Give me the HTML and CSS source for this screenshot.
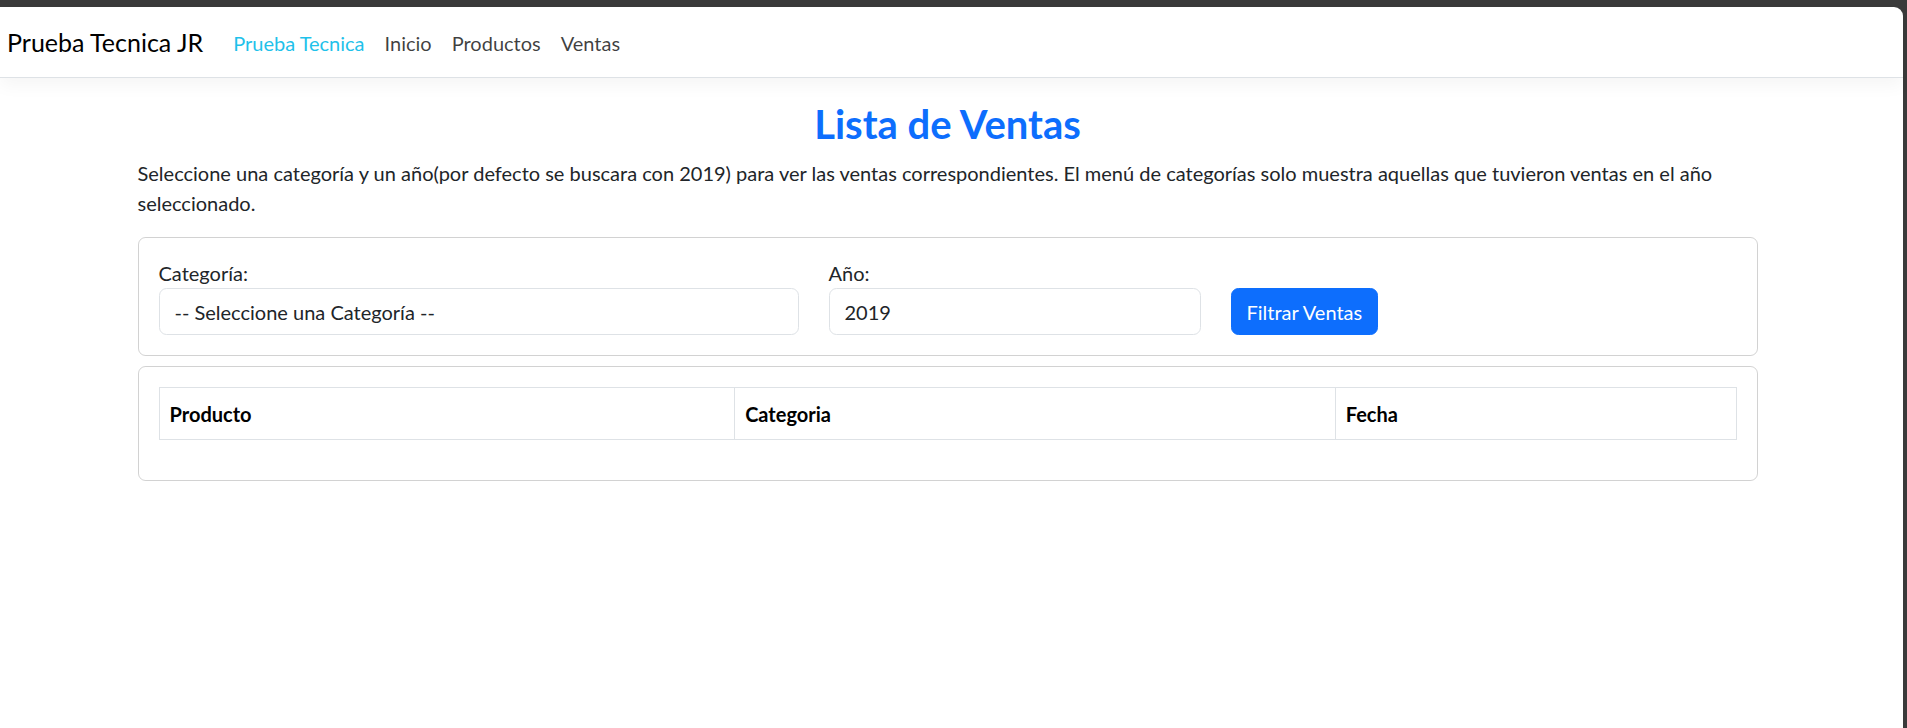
FILE: index.html
```html
<!DOCTYPE html>
<html lang="es">
<head>
<meta charset="utf-8">
<title>Prueba Tecnica JR</title>
<link rel="stylesheet" href="styles.css">
</head>
<body>
<div class="window">
  <nav class="navbar">
    <a class="brand" href="#">Prueba Tecnica JR</a>
    <ul class="nav">
      <li><a class="nav-link active" href="#">Prueba Tecnica</a></li>
      <li><a class="nav-link" href="#">Inicio</a></li>
      <li><a class="nav-link" href="#">Productos</a></li>
      <li><a class="nav-link" href="#">Ventas</a></li>
    </ul>
  </nav>
  <main class="container">
    <h2 class="title">Lista de Ventas</h2>
    <p class="intro">Seleccione una categoría y un año(por defecto se buscara con 2019) para ver las ventas correspondientes. El menú de categorías solo muestra aquellas que tuvieron ventas en el año seleccionado.</p>
    <section class="card">
      <form class="filters">
        <div class="field field-cat">
          <label class="label">Categoría:</label>
          <div class="control">-- Seleccione una Categoría --</div>
        </div>
        <div class="field field-year">
          <label class="label">Año:</label>
          <div class="control">2019</div>
        </div>
        <div class="field field-btn">
          <button type="button" class="btn">Filtrar Ventas</button>
        </div>
      </form>
    </section>
    <section class="card card-table">
      <table class="table">
        <thead>
          <tr>
            <th class="col-prod">Producto</th>
            <th class="col-cat">Categoria</th>
            <th class="col-date">Fecha</th>
          </tr>
        </thead>
        <tbody></tbody>
      </table>
    </section>
  </main>
</div>
</body>
</html>
```
FILE: styles.css
```css
* { box-sizing: border-box; }
html, body { margin: 0; padding: 0; height: 100%; }
body {
  background: #3a3a3a;
  font-family: "Segoe UI", "Lato", "Liberation Sans", sans-serif;
  color: #212529;
  font-size: 20px;
  line-height: 1.5;
  overflow: hidden;
}
.window {
  margin-top: 7px;
  margin-right: 4px;
  background: #fff;
  min-height: calc(100% - 7px);
  border-top-right-radius: 9px;
}
.navbar {
  height: 71px;
  display: flex;
  align-items: center;
  padding: 2px 7px 0;
  border-bottom: 1px solid #dee2e6;
  box-shadow: 0 8px 16px rgba(0, 0, 0, 0.04);
}
.brand {
  font-size: 25px;
  color: #000;
  text-decoration: none;
  margin-right: 20px;
}
.nav {
  display: flex;
  list-style: none;
  margin: 0;
  padding: 0;
}
.nav-link {
  display: block;
  padding: 10px 10px;
  color: rgba(0, 0, 0, 0.75);
  text-decoration: none;
}
.nav-link.active { color: #1fc1ea; }
.container {
  width: 1620px;
  margin: 0 auto;
  padding: 0;
  position: relative;
  left: -4px;
}
.title {
  margin: 22px 0 10px;
  text-align: center;
  font-size: 40px;
  line-height: 1.2;
  font-weight: 700;
  color: #0d6efd;
}
.intro { margin: 0 0 19px; }
.card {
  border: 1px solid rgba(0, 0, 0, 0.175);
  border-radius: 7.5px;
  padding: 20px;
  margin-bottom: 10px;
}
.filters {
  display: flex;
  gap: 30px;
  align-items: flex-end;
  margin: 0;
}
.field-cat { width: 640px; }
.field-year { width: 372px; }
.label { display: block; }
.control {
  height: 47px;
  border: 1px solid #dee2e6;
  border-radius: 7.5px;
  padding: 0 15px;
  display: flex;
  align-items: center;
}
.btn {
  height: 47px;
  padding: 0 15px;
  border: 1px solid #0d6efd;
  background: #0d6efd;
  color: #fff;
  font: inherit;
  border-radius: 7.5px;
}
.table {
  width: 100%;
  border-collapse: collapse;
  margin-bottom: 0;
}
.table th {
  border: 1px solid #dee2e6;
  padding: 10px 10px;
  text-align: left;
  font-weight: 700;
  color: #000;
  height: 52px;
}
.card-table { padding-bottom: 40px; }
.col-prod { width: 576px; }
.col-cat { width: 601px; }
.col-date { width: 401px; }
```
